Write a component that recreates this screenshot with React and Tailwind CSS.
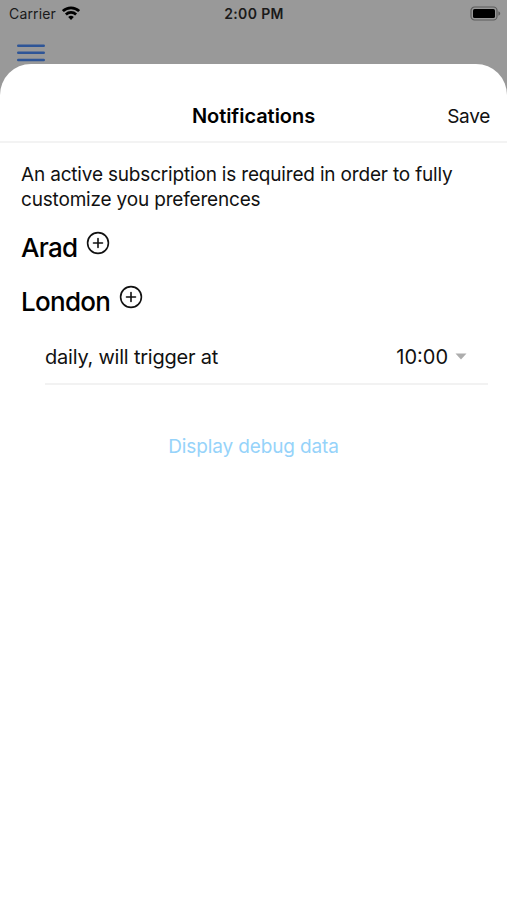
import React, { useState } from 'react';

const CITIES = [
  { name: 'Arad', width: 'w-[56.5px]', alerts: [] },
  { name: 'London', width: 'w-[89.5px]', alerts: [{ label: 'daily, will trigger at', time: '10:00' }] },
];

function WifiIcon() {
  return (
    <svg className="w-[18px] h-[14px]" viewBox="0 0 18 14" fill="none" stroke="#000" strokeWidth="2.7">
      <path d="M0.9 5.1a11.6 11.6 0 0 1 16.2 0" />
      <path d="M3.9 8.5a7.3 7.3 0 0 1 10.2 0" />
      <path d="M9 14 L6.2 11.1a4 4 0 0 1 5.6 0z" fill="#000" stroke="none" />
    </svg>
  );
}

function BatteryIcon() {
  return (
    <svg className="w-[31px] h-[15px]" viewBox="0 0 31 15">
      <rect x="1" y="1" width="26" height="13" rx="3.6" fill="none" stroke="#5c5c5c" strokeWidth="1.2" />
      <rect x="3" y="3" width="22" height="9" rx="1.6" fill="#000" />
      <path d="M28.4 5.2c1.2.5 1.8 1.3 1.8 2.3s-.6 1.8-1.8 2.3z" fill="#5c5c5c" />
    </svg>
  );
}

function PlusIcon() {
  return (
    <svg className="w-[24px] h-[24px]" viewBox="0 0 24 24" fill="none" stroke="#111" strokeWidth="1.6" strokeLinecap="round">
      <circle cx="12" cy="12" r="10.4" />
      <path d="M12 7.5v9M7.5 12h9" />
    </svg>
  );
}

function StatusBar() {
  return (
    <div className="grid grid-cols-[1fr_auto_1fr] items-center h-[26px] pl-[7px] pr-[6px] text-[14px] text-[#1a1a1a]">
      <div className="flex items-center gap-[6px] pl-[2px]">
        <span className="tracking-[0.15px]">Carrier</span>
        <WifiIcon />
      </div>
      <span className="pt-px text-center font-semibold text-[14px] tracking-[0.35px]">2:00 PM</span>
      <div className="flex justify-end">
        <BatteryIcon />
      </div>
    </div>
  );
}

function AlertRow({ alert }) {
  return (
    <div className="flex items-center justify-between ml-[24px] mr-[-2px] mt-[11px] h-[55px] pr-[21px] border-b-2 border-[#f2f2f2] text-[20px]">
      <span className="tracking-[-0.22px]">{alert.label}</span>
      <button className="flex items-center gap-[7px]">
        <span>{alert.time}</span>
        <svg className="w-[12px] h-[7px]" viewBox="0 0 12 7">
          <path d="M0.5 0.5h11L6 6.5z" fill="#adadad" />
        </svg>
      </button>
    </div>
  );
}

export default function App() {
  const [cities] = useState(CITIES);

  return (
    <div className="h-[900px] w-full flex flex-col overflow-hidden bg-[#999999] font-['Inter',sans-serif] text-[#111]">
      <StatusBar />
      <div className="h-[38px] pl-[17px] pt-[18px]">
        <svg className="w-[28px] h-[19px]" viewBox="0 0 28 19" stroke="#2e5597" strokeWidth="2.6" strokeLinecap="round">
          <path d="M1.3 1.7h25.4M1.3 8.8h25.4M1.3 16h25.4" />
        </svg>
      </div>

      <div className="flex-1 bg-white rounded-t-[31px]">
        <header className="grid grid-cols-3 items-end h-[79px] px-[17px] pb-[10px] border-b-2 border-[#f3f3f3] text-[20px]">
          <span />
          <h1 className="text-center font-semibold text-black tracking-[-0.05px]">Notifications</h1>
          <button className="justify-self-end text-[19px] tracking-[-0.3px]">Save</button>
        </header>

        <main className="px-[21px] pt-[19px]">
          <p className="text-[19px] leading-[25px] tracking-[-0.18px] whitespace-nowrap">
            An active subscription is required in order to fully
            <br />
            customize you preferences
          </p>

          {cities.map((city) => (
            <section key={city.name} className="pt-[14px] first-of-type:pt-[13px]">
              <div className="flex h-[40px]">
                <h2 className={`${city.width} text-[26px] leading-[46px] font-medium text-black tracking-[-0.7px] whitespace-nowrap`}>
                  {city.name}
                </h2>
                <button className="self-start ml-[8px] mt-[6px]">
                  <PlusIcon />
                </button>
              </div>
              {city.alerts.map((alert) => (
                <AlertRow key={alert.label} alert={alert} />
              ))}
            </section>
          ))}

          <button className="block mx-auto mt-[48px] text-[19px] tracking-[-0.13px] text-[#96d3fa]">Display debug data</button>
        </main>
      </div>
    </div>
  );
}
